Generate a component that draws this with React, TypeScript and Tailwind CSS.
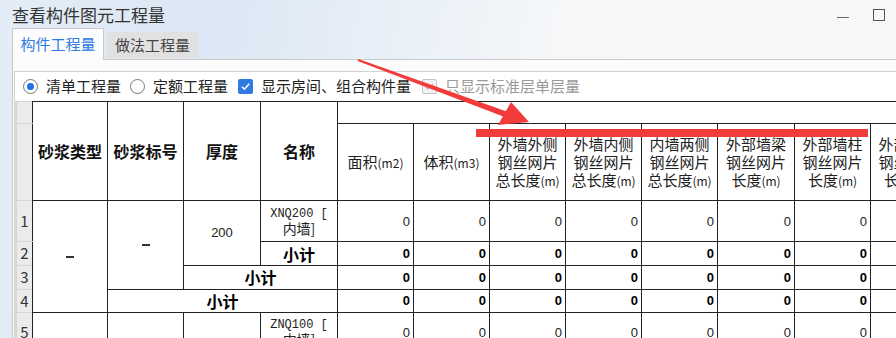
import React from "react";

const cols = [16, 75, 76, 77, 77, 76, 76, 76, 76, 76, 77, 76, 76];

const headers: [string, string][][] = [
  [["面积", "(m2)"]],
  [["体积", "(m3)"]],
  [["外墙外侧", ""], ["钢丝网片", ""], ["总长度", "(m)"]],
  [["外墙内侧", ""], ["钢丝网片", ""], ["总长度", "(m)"]],
  [["内墙两侧", ""], ["钢丝网片", ""], ["总长度", "(m)"]],
  [["外部墙梁", ""], ["钢丝网片", ""], ["长度", "(m)"]],
  [["外部墙柱", ""], ["钢丝网片", ""], ["长度", "(m)"]],
  [["外部墙垛", ""], ["钢丝网片", ""], ["长度", "(m)"]],
];

const rh =
  "bg-[#ebebeb] border border-[#d6d6d6] border-r-[#222] text-center align-middle text-[15px] text-[#333] p-0 font-['Noto_Sans_CJK_SC',sans-serif]";
const cell = "border border-[#222] p-0 align-middle bg-white";
const hb = "text-center text-[16px] font-bold font-['Noto_Sans_CJK_SC',sans-serif] text-[#111]";

function Values({ bold }: { bold?: boolean }) {
  return (
    <>
      {Array.from({ length: 8 }).map((_, i) => (
        <td
          key={i}
          className={`${cell} text-right pr-[3px] text-[13px] leading-[15px] font-['Liberation_Sans',sans-serif] ${
            bold ? "font-bold text-[#000]" : "text-[#222]"
          }`}
        >
          0
        </td>
      ))}
    </>
  );
}

function Sub({ span }: { span?: number }) {
  return (
    <td
      colSpan={span}
      className={`${cell} text-center text-[16px] leading-[18px] font-bold font-['Noto_Sans_CJK_SC',sans-serif] text-[#000]`}
    >
      小计
    </td>
  );
}

function NameCell({ a }: { a: string }) {
  return (
    <td className={`${cell} text-center text-[12px] leading-[14px] text-[#222]`}>
      <div className="font-['Liberation_Mono',monospace]">{a}</div>
      <div className="font-['Noto_Sans_CJK_SC',sans-serif] text-[14px] leading-[15px]">内墙]</div>
    </td>
  );
}

function Dash() {
  return (
    <div className="flex justify-center">
      <span className="h-[2px] w-[8px] bg-[#333]" />
    </div>
  );
}

export default function App() {
  return (
    <div className="relative flex h-[338px] w-[896px] flex-col overflow-hidden bg-[linear-gradient(100deg,#e4edf7_0%,#dbe7f4_22%,#e9f0f8_42%,#f5f7f9_58%,#f8f8f8_100%)] font-['Noto_Sans_CJK_SC',sans-serif] text-[#222]">
      {/* title bar */}
      <div className="flex h-[29px] shrink-0 items-center justify-between pl-[12px] pr-[11px]">
        <span className="text-[17px] text-[#333]">查看构件图元工程量</span>
        <div className="flex items-center gap-[24px]">
          <div className="mt-[6px] h-px w-[12px] bg-[#666]" />
          <div className="h-[12px] w-[12px] border border-[#555]" />
        </div>
      </div>

      {/* tabs */}
      <div className="flex h-[30px] shrink-0 items-end pl-[12px]">
        <div className="relative z-10 -mb-px flex h-[32px] w-[92px] items-center justify-center border border-b-0 border-[#c9c9c9] bg-[#fcfcfc] text-[15px] text-[#2f7be3]">
          构件工程量
        </div>
        <div className="mb-px ml-[3px] flex h-[26px] w-[91px] items-center justify-center bg-[#e1e1e1] text-[15px] text-[#444]">
          做法工程量
        </div>
      </div>

      {/* panel */}
      <div className="ml-[12px] flex-1 border-l border-t border-[#c9c9c9] bg-[#fcfcfc]">
        <div className="h-[11px]" />
        <div className="ml-px h-full border-l border-t border-[#d2d2d2] bg-white">
          {/* toolbar */}
          <div className="flex h-[29px] items-center pl-[8px] text-[15px] text-[#222]">
            <span className="flex h-[15px] w-[15px] items-center justify-center rounded-full border border-[#767676] bg-white">
              <span className="h-[7px] w-[7px] rounded-full bg-[#1a73e8]" />
            </span>
            <span className="ml-[8px]">清单工程量</span>
            <span className="ml-[9px] h-[15px] w-[15px] rounded-full border border-[#767676] bg-white" />
            <span className="ml-[8px]">定额工程量</span>
            <span className="ml-[10px] flex h-[15px] w-[15px] items-center justify-center rounded-[2px] bg-[#2f7be3]">
              <svg width="11" height="11" viewBox="0 0 11 11">
                <path d="M2 5.8 L4.4 8.2 L9.2 2.8" fill="none" stroke="#fff" strokeWidth="1.6" />
              </svg>
            </span>
            <span className="ml-[8px]">显示房间、组合构件量</span>
            <span className="ml-[11px] flex h-[15px] w-[15px] items-center justify-center rounded-[2px] border border-[#c4c4c4] bg-[#f2f2f2]">
              <svg width="11" height="11" viewBox="0 0 11 11">
                <path d="M1.5 5.8 L4 8.2 L9 2.8" fill="none" stroke="#c2c2c2" strokeWidth="1.4" />
              </svg>
            </span>
            <span className="ml-[8px] text-[#9a9a9a]">只显示标准层单层量</span>
          </div>

          {/* table */}
          <div className="bg-[#dcdcdc] pl-px">
            <table className="w-[930px] table-fixed border-collapse bg-white">
              <colgroup>
                {cols.map((w, i) => (
                  <col key={i} style={{ width: w }} />
                ))}
              </colgroup>
              <tbody>
                <tr className="h-[22px]">
                  <td className={`${rh} border-t-[#d6d6d6]`} />
                  <td rowSpan={2} className={`${cell} ${hb}`}>砂浆类型</td>
                  <td rowSpan={2} className={`${cell} ${hb}`}>砂浆标号</td>
                  <td rowSpan={2} className={`${cell} ${hb}`}>厚度</td>
                  <td rowSpan={2} className={`${cell} ${hb}`}>名称</td>
                  <td colSpan={8} className={cell} />
                </tr>
                <tr className="h-[77px]">
                  <td className={rh} />
                  {headers.map((h, i) => (
                    <td
                      key={i}
                      className={`${cell} overflow-hidden whitespace-nowrap text-center text-[15px] leading-[18px] text-[#222]`}
                    >
                      {h.map(([t, u], j) => (
                        <div key={j}>
                          {t}
                          {u && <span className="text-[12px]">{u}</span>}
                        </div>
                      ))}
                    </td>
                  ))}
                </tr>
                <tr className="h-[41px]">
                  <td className={rh}>1</td>
                  <td rowSpan={4} className={`${cell} text-center`}>
                    <Dash />
                  </td>
                  <td rowSpan={3} className={`${cell} text-center`}>
                    <Dash />
                  </td>
                  <td rowSpan={2} className={`${cell} text-center text-[13px] font-['Liberation_Sans',sans-serif]`}>200</td>
                  <NameCell a="XNQ200 [" />
                  <Values />
                </tr>
                <tr className="h-[24px]">
                  <td className={rh}>2</td>
                  <Sub />
                  <Values bold />
                </tr>
                <tr className="h-[22px]">
                  <td className={rh}>3</td>
                  <Sub span={2} />
                  <Values bold />
                </tr>
                <tr className="h-[22px]">
                  <td className={rh}>4</td>
                  <Sub span={3} />
                  <Values bold />
                </tr>
                <tr className="h-[40px]">
                  <td className={rh}>5</td>
                  <td className={cell} />
                  <td className={cell} />
                  <td className={cell} />
                  <NameCell a="ZNQ100 [" />
                  <Values />
                </tr>
              </tbody>
            </table>
          </div>
        </div>
      </div>

      {/* red annotation overlay */}
      <svg className="pointer-events-none absolute left-0 top-0" width="896" height="338" viewBox="0 0 896 338">
        <polygon points="358.3,59.1 357.7,60.9 504,116.8 506,111.2" fill="#f23b3b" />
        <polygon points="511,102 529,122 498,125" fill="#f23b3b" />
        <rect x="476" y="129" width="392" height="8" fill="#f23b3b" />
      </svg>
    </div>
  );
}
